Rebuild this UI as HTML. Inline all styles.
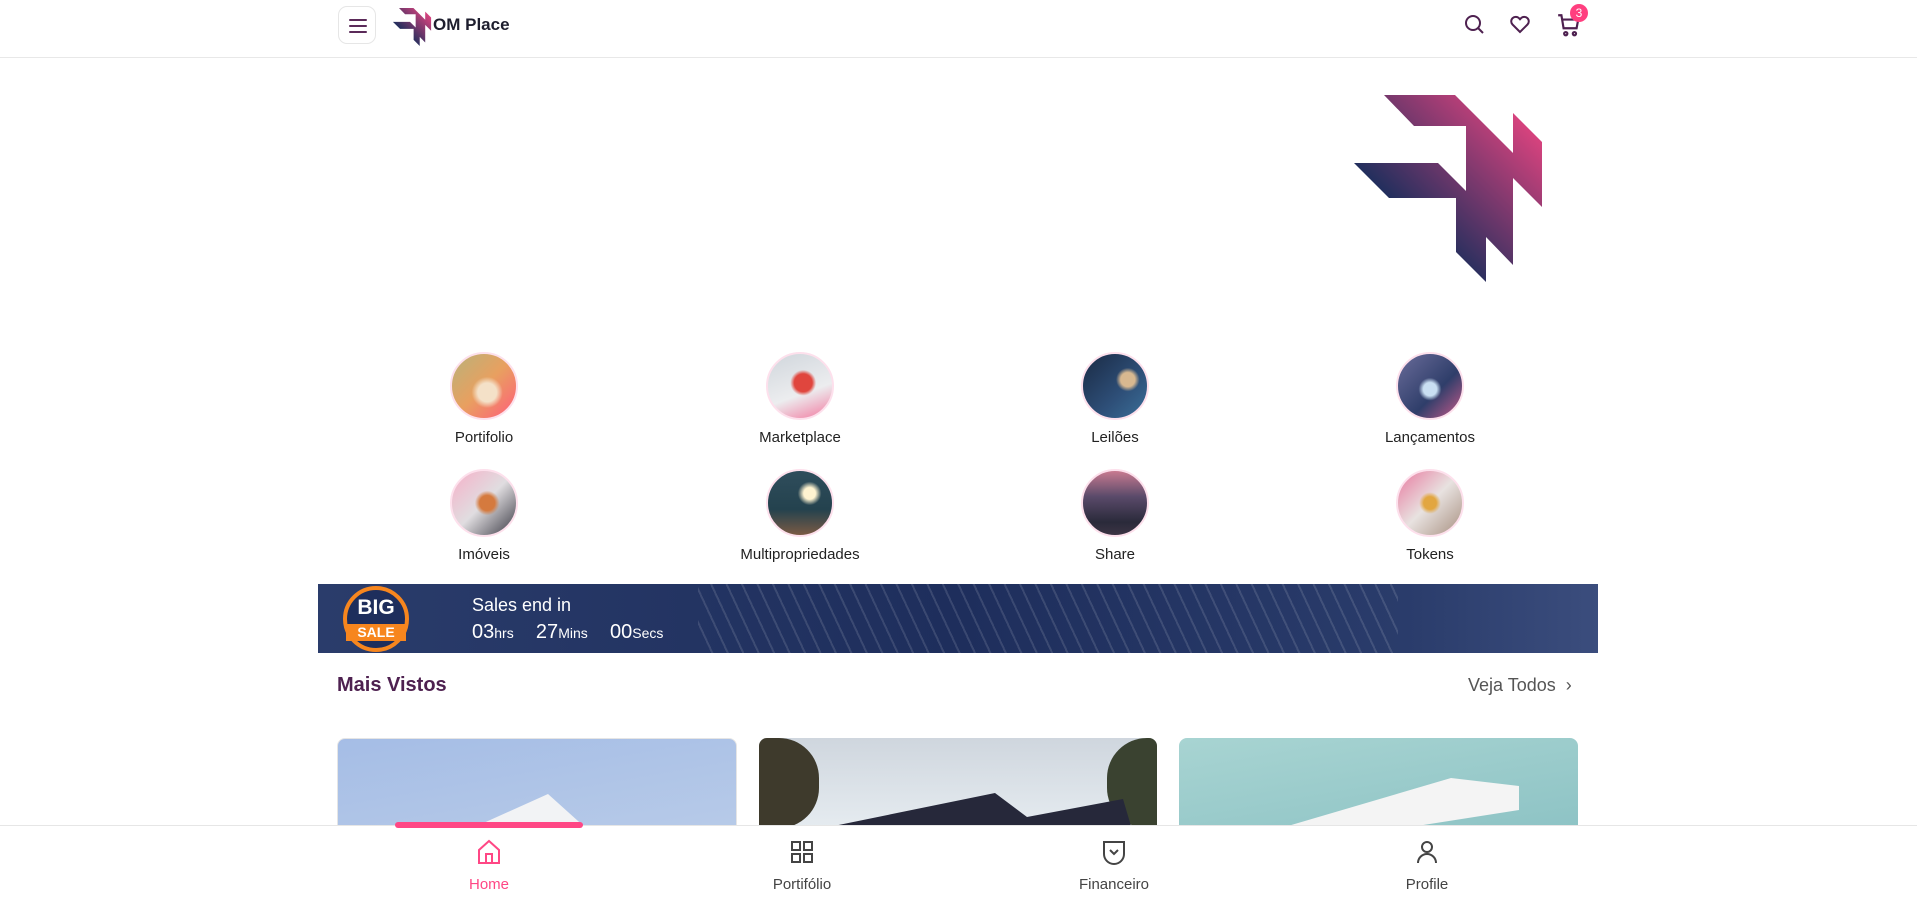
<!DOCTYPE html>
<html><head><meta charset="utf-8"><style>
*{margin:0;padding:0;box-sizing:border-box}
body{width:1917px;height:903px;overflow:hidden;background:#fff;font-family:"Liberation Sans",sans-serif;position:relative}
.hdr{position:absolute;left:0;top:0;width:1917px;height:58px;border-bottom:1px solid #e8e8e8;background:#fff}
.ham{position:absolute;left:338px;top:6px;width:38px;height:38px;border:1px solid #e6e6e6;border-radius:9px}
.ham i{position:absolute;left:10px;width:18px;height:2px;background:#5b2a59;border-radius:1px}
.ico{position:absolute}
.cat{position:absolute;width:250px;text-align:center;font-size:15px;color:#222}
.cat .c{width:68px;height:68px;border-radius:50%;margin:0 auto 9px;border:2px solid #fde0ec}
.banner{position:absolute;left:318px;top:584px;width:1280px;height:69px;background:linear-gradient(90deg,#2a3c6b 0%,#1e2e5c 50%,#2a3c6b 85%,#3b4d7d 100%);overflow:hidden}
.card{position:absolute;top:738px;height:100px;border-radius:8px 8px 0 0;overflow:hidden}
.nav{position:absolute;left:0;top:825px;width:1917px;height:78px;background:#fff;border-top:1px solid #e6e6e6;z-index:5}
.nv{position:absolute;top:0;width:200px;text-align:center;font-size:15px;color:#444}
.nv svg{display:block;margin:12px auto 10px}
</style></head><body>
<svg width="0" height="0" style="position:absolute"><defs>
<linearGradient id="lg" x1="0" y1="1" x2="1" y2="0"><stop offset="0.3" stop-color="#1c2e5c"/><stop offset="1" stop-color="#ff4785"/></linearGradient>
<symbol id="logo" viewBox="1354 95 188 187"><polygon fill="url(#lg)" points="1384,95 1455,95 1513,153 1513,113 1542,142 1542,207 1513,178 1513,265 1486,237 1486,282 1456,252 1456,198 1389,198 1354,163 1438,163 1466,191 1466,126 1414,126"/></symbol>
</defs></svg>

<div class="hdr">
 <div class="ham"><i style="top:12px"></i><i style="top:18px"></i><i style="top:24px"></i></div>
 <svg class="ico" style="left:392px;top:8px" width="40" height="38"><use href="#logo"/></svg>
 <div style="position:absolute;left:433px;top:15px;font-size:17px;font-weight:bold;color:#1e1e2e">OM Place</div>
 <svg class="ico" style="left:1462px;top:12px" width="24" height="24" viewBox="0 0 24 24" fill="none" stroke="#4e2150" stroke-width="2"><circle cx="11" cy="11" r="7"/><path d="M16 16l5 5"/></svg>
 <svg class="ico" style="left:1508px;top:12px" width="24" height="24" viewBox="0 0 24 24" fill="none" stroke="#4e2150" stroke-width="2"><path d="M12 20l-7.5-7.5a4.5 4.5 0 016.5-6.3L12 7.3l1-1.1a4.5 4.5 0 016.5 6.3z"/></svg>
 <svg class="ico" style="left:1556px;top:12px" width="26" height="26" viewBox="0 0 24 24" fill="none" stroke="#4e2150" stroke-width="2"><path d="M2 3h3l2 12h12l1.5-8H6"/><circle cx="9" cy="20" r="1.5"/><circle cx="17" cy="20" r="1.5"/></svg>
 <div style="position:absolute;left:1570px;top:4px;width:18px;height:18px;border-radius:50%;background:#ff3f7f;color:#fff;font-size:12px;text-align:center;line-height:18px">3</div>
</div>

<svg class="ico" style="left:1354px;top:95px" width="188" height="187"><use href="#logo"/></svg>

<div class="cat" style="left:359px;top:352px"><div class="c" style="background:radial-gradient(circle at 55% 60%,#f4e1c8 0 18%,transparent 30%),linear-gradient(135deg,#b9b27a,#e8a060 50%,#ff5d7a)"></div>Portifolio</div>
<div class="cat" style="left:675px;top:352px"><div class="c" style="background:radial-gradient(circle at 55% 45%,#e0463e 0 18%,transparent 26%),linear-gradient(160deg,#d0d6dc,#ecedef 60%,#f27aa0)"></div>Marketplace</div>
<div class="cat" style="left:990px;top:352px"><div class="c" style="background:radial-gradient(circle at 70% 40%,#d8b890 0 12%,transparent 20%),linear-gradient(135deg,#1a2a44,#2e4f78 60%,#3a6f98)"></div>Leilões</div>
<div class="cat" style="left:1305px;top:352px"><div class="c" style="background:radial-gradient(circle at 50% 55%,#c9dff2 0 14%,transparent 24%),linear-gradient(135deg,#6a6c9a,#2f3e6a 60%,#c85a8a)"></div>Lançamentos</div>
<div class="cat" style="left:359px;top:469px"><div class="c" style="background:radial-gradient(circle at 55% 50%,#d57a3e 0 16%,transparent 26%),linear-gradient(135deg,#f6b0c8,#e0dde0 50%,#3a3a44)"></div>Imóveis</div>
<div class="cat" style="left:675px;top:469px"><div class="c" style="background:radial-gradient(circle at 65% 35%,#fff3d0 0 10%,transparent 20%),linear-gradient(180deg,#2f4d5c,#24424e 60%,#7a5a44)"></div>Multipropriedades</div>
<div class="cat" style="left:990px;top:469px"><div class="c" style="background:linear-gradient(180deg,#c87a90,#5a4a6a 40%,#2a2a3a 80%,#3c3444)"></div>Share</div>
<div class="cat" style="left:1305px;top:469px"><div class="c" style="background:radial-gradient(circle at 50% 50%,#e2a640 0 14%,transparent 24%),linear-gradient(135deg,#e87aa0,#e8e2e0 50%,#a89080)"></div>Tokens</div>

<div class="banner">
 <div style="position:absolute;left:380px;top:0;width:700px;height:69px;background:repeating-linear-gradient(65deg,transparent 0 12px,rgba(255,255,255,.12) 12px 14px)"></div>
 <div style="position:absolute;left:25px;top:2px;width:66px;height:66px;border-radius:50%;background:#1e2e5c;border:4px solid #f7861e"></div>
 <div style="position:absolute;left:28px;top:40px;width:60px;height:17px;background:#f7861e"></div>
 <div style="position:absolute;left:22px;top:13px;width:72px;text-align:center;color:#fff;font-weight:bold;font-size:21px;line-height:22px">BIG</div>
 <div style="position:absolute;left:22px;top:40px;width:72px;text-align:center;color:#fff;font-weight:bold;font-size:14px;line-height:17px">SALE</div>
 <div style="position:absolute;left:154px;top:11px;color:#fff;font-size:18px">Sales end in</div>
 <div style="position:absolute;left:154px;top:37px;color:#fff;font-size:20px;white-space:nowrap">03<span style="font-size:14px">hrs</span>&nbsp;&nbsp;&nbsp; 27<span style="font-size:14px">Mins</span>&nbsp;&nbsp;&nbsp; 00<span style="font-size:14px">Secs</span></div>
</div>

<div style="position:absolute;left:337px;top:674px;font-size:20px;font-weight:bold;color:#4e2150">Mais Vistos</div>
<div style="position:absolute;left:1468px;top:675px;font-size:18px;color:#555">Veja Todos &nbsp;›</div>

<div class="card" style="left:337px;width:400px;background:linear-gradient(170deg,#a5bde6,#b8cbe8);border:1px solid #e5e5e5"><div style="position:absolute;left:130px;top:55px;width:160px;height:120px;background:#f2f3f5;clip-path:polygon(0 30%,50% 0,100% 60%,100% 100%,0 100%)"></div></div>
<div class="card" style="left:759px;width:398px;background:linear-gradient(180deg,#cfd6de,#e8eef2)"><div style="position:absolute;left:0;top:0;width:60px;height:90px;background:#3e3a2c;border-radius:0 40px 40px 0"></div><div style="position:absolute;right:0;top:0;width:50px;height:90px;background:#3a4230;border-radius:40px 0 0 40px"></div><div style="position:absolute;left:60px;top:55px;width:320px;height:60px;background:#26283a;clip-path:polygon(0 60%,55% 0,65% 40%,95% 10%,100% 100%,0 100%)"></div></div>
<div class="card" style="left:1179px;width:399px;background:linear-gradient(170deg,#a8d4d2,#8cc2c4)"><div style="position:absolute;left:0;top:40px;width:340px;height:80px;background:#f4f4f4;clip-path:polygon(0 100%,80% 0,100% 10%,100% 40%,10% 100%)"></div></div>

<div class="nav">
 <div style="position:absolute;left:395px;top:-4px;width:188px;height:6px;border-radius:3px;background:#ff4785"></div>
 <div class="nv" style="left:389px;color:#ff4785"><svg width="26" height="28" viewBox="0 0 26 28" fill="none" stroke="#ff4785" stroke-width="2"><path d="M3 12L13 3l10 9v13H3z"/><path d="M10 25v-9h6v9"/></svg>Home</div>
 <div class="nv" style="left:702px"><svg width="26" height="28" viewBox="0 0 26 28" fill="none" stroke="#444" stroke-width="2"><rect x="3" y="4" width="8" height="8"/><rect x="15" y="4" width="8" height="8"/><rect x="3" y="16" width="8" height="8"/><rect x="15" y="16" width="8" height="8"/></svg>Portifólio</div>
 <div class="nv" style="left:1014px"><svg width="26" height="28" viewBox="0 0 26 28" fill="none" stroke="#444" stroke-width="2"><path d="M3 4h20v12a10 10 0 01-20 0z"/><path d="M9 12l4 4 4-4"/></svg>Financeiro</div>
 <div class="nv" style="left:1327px"><svg width="26" height="28" viewBox="0 0 26 28" fill="none" stroke="#444" stroke-width="2"><circle cx="13" cy="9" r="5"/><path d="M4 25a9 9 0 0118 0"/></svg>Profile</div>
</div>
</body></html>
